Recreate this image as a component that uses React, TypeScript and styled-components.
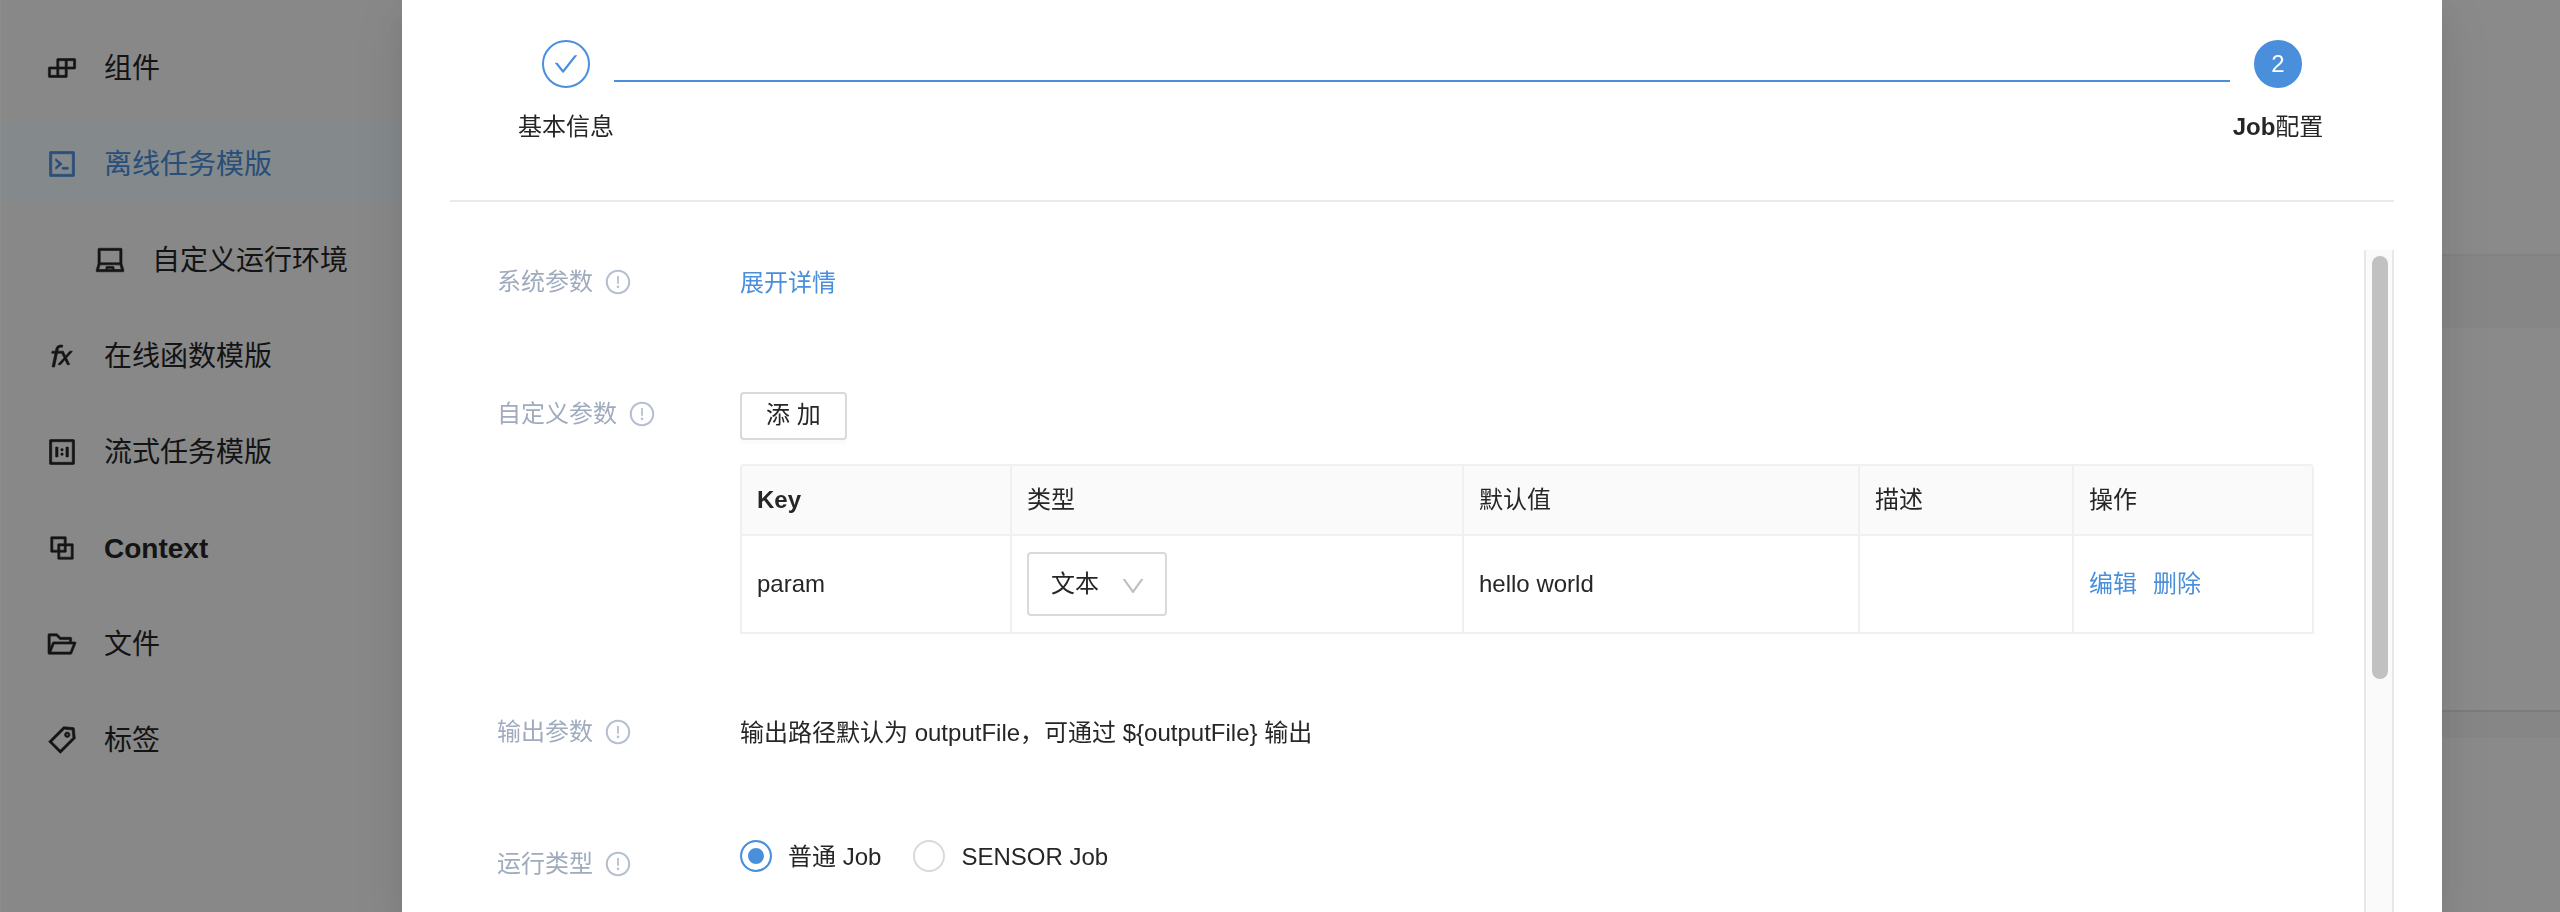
import React, { useState } from "react";
import styled, { createGlobalStyle, css } from "styled-components";
import {
  AiOutlineBlock,
  AiOutlineBuild,
  AiOutlineCheck,
  AiOutlineCode,
  AiOutlineDown,
  AiOutlineExclamationCircle,
  AiOutlineFolderOpen,
  AiOutlineFunction,
  AiOutlineLaptop,
  AiOutlineOneToOne,
  AiOutlineTag,
} from "react-icons/ai";

const primary = "#4a8fdc";
const ink = "#262626";

const GlobalStyle = createGlobalStyle`
  *, *::before, *::after { box-sizing: border-box; }
  body {
    margin: 0;
    color: ${ink};
    background: #fdfdfd;
    font-family: "Liberation Sans", "Noto Sans CJK SC", sans-serif;
    font-size: 24px;
    font-weight: 400;
    line-height: 36px;
  }
  button, input, select { font: inherit; color: inherit; }
  a { color: ${primary}; text-decoration: none; }
`;

/* Page behind the dialog */

const Page = styled.div`
  display: flex;
  height: 100vh;
  overflow: hidden;
`;

const Sidebar = styled.nav`
  flex: none;
  display: flex;
  flex-direction: column;
  gap: 16px;
  width: 432px;
  padding: 28px 0;
  background: #f8f8f8;
  border-left: 1px solid #fff;
`;

const NavItem = styled.a<{ $active?: boolean; $nested?: boolean }>`
  display: flex;
  align-items: center;
  gap: 26px;
  height: 80px;
  padding-left: ${(p) => (p.$nested ? 93 : 45)}px;
  font-size: 28px;
  color: ${(p) => (p.$active ? primary : ink)};
  background: ${(p) => (p.$active ? "#f0f9ff" : "transparent")};

  svg {
    width: 32px;
    height: 32px;
    stroke-width: 20;
  }
`;

const NavText = styled.span<{ $strong?: boolean }>`
  padding-top: 2px;
  font-weight: ${(p) => (p.$strong ? 700 : 400)};
`;

const Content = styled.main`
  flex: 1;
  display: flex;
  flex-direction: column;
  background: #f4f4f4;
`;

const Card = styled.section<{ $height?: number }>`
  ${(p) =>
    p.$height
      ? css`
          height: ${p.$height}px;
        `
      : css`
          flex: 1;
        `}
  background: #fcfcfc;
`;

const Band = styled.div<{ $height: number; $line: string }>`
  height: ${(p) => p.$height}px;
  border-top: 2px solid ${(p) => p.$line};
`;

/* Dialog */

const Mask = styled.div`
  position: fixed;
  inset: 0;
  display: flex;
  padding: 0 118px 0 402px;
  background: rgba(0, 0, 0, 0.45);
`;

const Dialog = styled.div`
  flex: 1;
  min-width: 0;
  display: flex;
  flex-direction: column;
  padding: 0 48px;
  background: #fff;
  box-shadow: 0 6px 12px -8px rgba(0, 0, 0, 0.12), 0 12px 32px rgba(0, 0, 0, 0.08),
    0 18px 56px 16px rgba(0, 0, 0, 0.05);
`;

const Steps = styled.ol`
  display: flex;
  margin: 0;
  padding: 40px 68px 54px;
  list-style: none;
  border-bottom: 2px solid #e6e9ed;
`;

const Step = styled.li<{ $grow?: boolean }>`
  display: flex;
  flex: ${(p) => (p.$grow ? 1 : "none")};
`;

const StepBody = styled.div`
  display: flex;
  flex-direction: column;
  align-items: center;
  gap: 21px;
  width: 96px;
  white-space: nowrap;
`;

const StepDot = styled.span<{ $current?: boolean }>`
  display: flex;
  align-items: center;
  justify-content: center;
  width: 48px;
  height: 48px;
  border: 2px solid ${primary};
  border-radius: 50%;
  color: ${(p) => (p.$current ? "#fff" : primary)};
  background: ${(p) => (p.$current ? primary : "#fff")};

  svg { width: 28px; height: 28px; }
`;

const StepLine = styled.span`
  flex: 1;
  height: 2px;
  margin-top: 40px;
  background: ${primary};
`;

const StepTitle = styled.span`
  padding-bottom: 1px;

  b { font-weight: 700; }
`;

const Body = styled.div`
  flex: 1;
  min-height: 0;
  display: flex;
  padding-top: 48px;
`;

const Form = styled.form`
  flex: 1;
  min-width: 0;
  display: flex;
  flex-direction: column;
  gap: 66px;
  padding: 0 50px 0 47px;
  overflow: hidden;
`;

const Field = styled.div`
  flex: none;
  display: flex;
  align-items: flex-start;
`;

const FieldLabel = styled.div`
  flex: none;
  display: flex;
  align-items: center;
  gap: 11px;
  width: 243px;
  height: 64px;
  color: #a0abbe;

  svg { width: 28px; height: 28px; color: #b4bfd0; }
`;

const FieldValue = styled.div`
  flex: 1;
  min-width: 0;
`;

const Line = styled.div`
  display: flex;
  align-items: center;
  height: 66px;
`;

const TableArea = styled.div`
  display: flex;
  flex-direction: column;
  align-items: flex-start;
  gap: 24px;
  padding-top: 10px;
`;

const AddButton = styled.button`
  height: 48px;
  padding: 0 24px 2px;
  line-height: 36px;
  background: #fff;
  border: 2px solid #d9d9d9;
  border-radius: 4px;
  box-shadow: 0 4px 0 rgba(0, 0, 0, 0.016);
`;

const Table = styled.table`
  width: 100%;
  table-layout: fixed;
  border-collapse: separate;
  border-spacing: 0;
  border: 2px solid #f0f0f0;
  border-width: 2px 0 0 2px;
  border-radius: 4px 4px 0 0;
`;

const Column = styled.col<{ $width?: number }>`
  width: ${(p) => (p.$width ? `${p.$width}px` : "auto")};
`;

const cell = css`
  padding: 16px 15px;
  text-align: left;
  border: 2px solid #f0f0f0;
  border-width: 0 2px 2px 0;
`;

const HeadCell = styled.th<{ $strong?: boolean }>`
  ${cell}
  font-weight: ${(p) => (p.$strong ? 700 : 400)};
  background: #fafafa;

  &:last-child { border-top-right-radius: 4px; }
`;

const Cell = styled.td`
  ${cell}
`;

const SelectBox = styled.div`
  display: grid;
  width: 140px;
  align-items: center;

  > * { grid-area: 1 / 1; }

  svg {
    justify-self: end;
    width: 28px;
    height: 28px;
    margin: 4px 20px 0 0;
    color: #bfbfbf;
    pointer-events: none;
  }
`;

const Select = styled.select`
  appearance: none;
  width: 100%;
  height: 64px;
  padding: 0 22px;
  background: #fff;
  border: 2px solid #d9d9d9;
  border-radius: 4px;
`;

const Actions = styled.div`
  display: flex;
  gap: 16px;
`;

const RadioGroup = styled.div`
  display: flex;
  gap: 32px;
  height: 48px;
`;

const RadioLabel = styled.label`
  display: flex;
  align-items: center;
  gap: 16px;
`;

const RadioText = styled.span`
  padding-top: 2px;
`;

const Radio = styled.input`
  appearance: none;
  width: 32px;
  height: 32px;
  margin: 0;
  border: 2px solid #d9d9d9;
  border-radius: 50%;
  background: #fff;

  &:checked {
    border-color: ${primary};
    background: ${primary};
    box-shadow: inset 0 0 0 6px #fff;
  }
`;

const ScrollTrack = styled.div`
  flex: none;
  width: 30px;
  padding: 6px;
  background: #fafafa;
  border: 2px solid #e8e8e8;
  border-width: 0 2px 0 2px;
`;

const ScrollThumb = styled.div`
  width: 16px;
  height: 65%;
  border-radius: 8px;
  background: #c1c1c1;
`;

const navItems = [
  { text: "组件", icon: <AiOutlineBuild /> },
  { text: "离线任务模版", icon: <AiOutlineCode />, active: true },
  { text: "自定义运行环境", icon: <AiOutlineLaptop />, nested: true },
  { text: "在线函数模版", icon: <AiOutlineFunction /> },
  { text: "流式任务模版", icon: <AiOutlineOneToOne /> },
  { text: "Context", icon: <AiOutlineBlock />, strong: true },
  { text: "文件", icon: <AiOutlineFolderOpen /> },
  { text: "标签", icon: <AiOutlineTag /> },
];

function LabelWithHint({ id, children }: { id?: string; children: React.ReactNode }) {
  return (
    <FieldLabel>
      <span id={id}>{children}</span>
      <AiOutlineExclamationCircle />
    </FieldLabel>
  );
}

export default function App() {
  const [jobType, setJobType] = useState("normal");

  return (
    <>
      <GlobalStyle />
      <Page>
        <Sidebar>
          {navItems.map((item) => (
            <NavItem key={item.text} href="#" $active={item.active} $nested={item.nested}>
              {item.icon}
              <NavText $strong={item.strong}>{item.text}</NavText>
            </NavItem>
          ))}
        </Sidebar>
        <Content>
          <Card $height={254} />
          <Band $height={74} $line="#ececec" />
          <Card $height={382} />
          <Band $height={28} $line="#e2e2e2" />
          <Card />
        </Content>
      </Page>

      <Mask>
        <Dialog role="dialog" aria-modal="true">
          <Steps>
            <Step $grow>
              <StepBody>
                <StepDot>
                  <AiOutlineCheck />
                </StepDot>
                <StepTitle>基本信息</StepTitle>
              </StepBody>
              <StepLine />
            </Step>
            <Step>
              <StepBody>
                <StepDot $current>2</StepDot>
                <StepTitle>
                  <b>Job</b>配置
                </StepTitle>
              </StepBody>
            </Step>
          </Steps>

          <Body>
            <Form>
              <Field>
                <LabelWithHint>系统参数</LabelWithHint>
                <FieldValue>
                  <Line>
                    <a href="#">展开详情</a>
                  </Line>
                </FieldValue>
              </Field>

              <Field>
                <LabelWithHint>自定义参数</LabelWithHint>
                <FieldValue>
                  <TableArea>
                    <AddButton type="button">添 加</AddButton>
                    <Table>
                      <colgroup>
                        <Column $width={270} />
                        <Column />
                        <Column $width={396} />
                        <Column $width={214} />
                        <Column $width={240} />
                      </colgroup>
                      <thead>
                        <tr>
                          <HeadCell $strong>Key</HeadCell>
                          <HeadCell>类型</HeadCell>
                          <HeadCell>默认值</HeadCell>
                          <HeadCell>描述</HeadCell>
                          <HeadCell>操作</HeadCell>
                        </tr>
                      </thead>
                      <tbody>
                        <tr>
                          <Cell>param</Cell>
                          <Cell>
                            <SelectBox>
                              <Select aria-label="类型" defaultValue="text">
                                <option value="text">文本</option>
                              </Select>
                              <AiOutlineDown />
                            </SelectBox>
                          </Cell>
                          <Cell>hello world</Cell>
                          <Cell />
                          <Cell>
                            <Actions>
                              <a href="#">编辑</a>
                              <a href="#">删除</a>
                            </Actions>
                          </Cell>
                        </tr>
                      </tbody>
                    </Table>
                  </TableArea>
                </FieldValue>
              </Field>

              <Field>
                <LabelWithHint>输出参数</LabelWithHint>
                <FieldValue>
                  <Line>{"输出路径默认为 outputFile，可通过 ${outputFile} 输出"}</Line>
                </FieldValue>
              </Field>

              <Field>
                <LabelWithHint id="job-type">运行类型</LabelWithHint>
                <FieldValue>
                  <RadioGroup role="radiogroup" aria-labelledby="job-type">
                    <RadioLabel>
                      <Radio
                        type="radio"
                        name="jobType"
                        checked={jobType === "normal"}
                        onChange={() => setJobType("normal")}
                      />
                      <RadioText>普通 Job</RadioText>
                    </RadioLabel>
                    <RadioLabel>
                      <Radio
                        type="radio"
                        name="jobType"
                        checked={jobType === "sensor"}
                        onChange={() => setJobType("sensor")}
                      />
                      <RadioText>SENSOR Job</RadioText>
                    </RadioLabel>
                  </RadioGroup>
                </FieldValue>
              </Field>
            </Form>
            <ScrollTrack>
              <ScrollThumb />
            </ScrollTrack>
          </Body>
        </Dialog>
      </Mask>
    </>
  );
}
